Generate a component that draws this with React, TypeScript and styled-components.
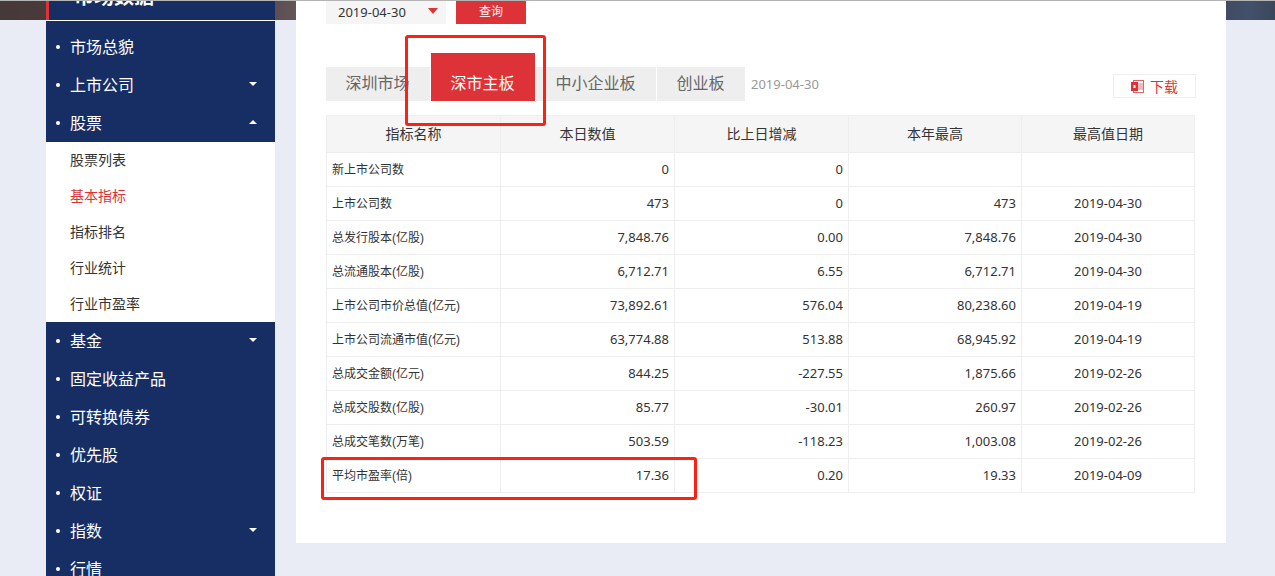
import React from "react";
import styled, { createGlobalStyle } from "styled-components";

const Global = createGlobalStyle`
  html, body { margin: 0; padding: 0; height: 576px; overflow: hidden; background: #e9ecf5; }
  body { font-family: "Liberation Sans", "Noto Sans CJK SC", sans-serif; color: #333; }
  * { box-sizing: border-box; }
`;

const NUM_FONT = `"Noto Sans", "Liberation Sans", sans-serif`;

const Page = styled.div`
  position: relative;
  width: 1275px;
  height: 576px;
  overflow: hidden;
  border-top: 1px solid #b4b4b4;
  background:
    linear-gradient(90deg, #46393a 0, #4a3a3a 46px, #5c4e52 275px, #635659 296px, #3f4c62 1226px, #43506a 1250px, #3c475c 1275px) no-repeat 0 0 / 100% 19px,
    #e9ecf5;
  display: flex;
  align-items: flex-start;
  padding-left: 46px;
`;

const Sidebar = styled.aside`
  width: 229px;
  flex: none;
  background: #172e65;
`;

const SideHead = styled.div`
  height: 19px;
  border-left: 3px solid #dd3338;
  overflow: hidden;
  display: flex;
  align-items: flex-end;
  padding-left: 25px;
  color: #fff;
  font-size: 20px;
  font-weight: bold;
  line-height: 20px;
  & > span { display: block; margin-bottom: 13px; white-space: nowrap; }
`;

const SideRule = styled.div`
  height: 1px;
  background: #fff;
`;

const NavList = styled.ul`
  list-style: none;
  margin: 0;
  padding: 7px 0 0;
`;

const NavItem = styled.li`
  height: 38px;
  display: flex;
  align-items: center;
  padding: 0 18px 0 10px;
  color: #fff;
  font-size: 16px;
  &::before {
    content: "";
    width: 4px;
    height: 4px;
    border-radius: 50%;
    background: #fff;
    margin-right: 10px;
    flex: none;
  }
`;

const NavLabel = styled.span`
  flex: 1;
  margin-top: -2px;
`;

const Caret = styled.i<{ $up?: boolean }>`
  width: 0;
  height: 0;
  margin-top: -2px;
  border-left: 4px solid transparent;
  border-right: 4px solid transparent;
  ${(p) => (p.$up ? "border-bottom: 4px solid #fff;" : "border-top: 4px solid #fff;")}
`;

const SubList = styled.ul`
  list-style: none;
  margin: 0;
  padding: 0;
  background: #fff;
`;

const SubItem = styled.li<{ $active?: boolean }>`
  height: 36px;
  line-height: 36px;
  padding-left: 24px;
  font-size: 14px;
  color: ${(p) => (p.$active ? "#dd3338" : "#333")};
`;

const Main = styled.main`
  width: 930px;
  height: 542px;
  margin-left: 21px;
  background: #fff;
  padding: 0 30px;
  flex: none;
`;

const QueryBar = styled.div`
  display: flex;
  gap: 10px;
  height: 23px;
`;

const DateBox = styled.div`
  width: 120px;
  background: #f5f5f5;
  padding: 0 8px 2px 12px;
  font-family: ${NUM_FONT};
  font-size: 13px;
  color: #333;
  display: flex;
  align-items: center;
  justify-content: space-between;
`;

const DateArrow = styled.i`
  width: 0;
  height: 0;
  border-left: 5px solid transparent;
  border-right: 5px solid transparent;
  border-top: 6px solid #dd3338;
  margin-bottom: 2px;
`;

const QueryButton = styled.button`
  width: 70px;
  border: 0;
  padding: 0 0 4px;
  background: #dd3338;
  color: #fff;
  font: 12px "Liberation Sans", "Noto Sans CJK SC", sans-serif;
`;

const TabRow = styled.div`
  display: flex;
  align-items: flex-end;
  height: 48px;
  margin-top: 29px;
`;

const Tab = styled.div<{ $active?: boolean; $w: number }>`
  width: ${(p) => p.$w}px;
  height: ${(p) => (p.$active ? 48 : 34)}px;
  margin-right: 1px;
  padding-right: 1px;
  background: ${(p) => (p.$active ? "#dd3338" : "#eeeeee")};
  color: ${(p) => (p.$active ? "#fff" : "#666")};
  font-size: 16px;
  line-height: 34px;
  text-align: center;
  padding-top: ${(p) => (p.$active ? 14 : 0)}px;
`;

const TabDate = styled.span`
  margin-left: 5px;
  height: 34px;
  line-height: 34px;
  font-family: ${NUM_FONT};
  font-size: 13px;
  color: #999;
`;

const Download = styled.div`
  margin-left: auto;
  margin-bottom: 3px;
  width: 83px;
  height: 24px;
  border: 1px solid #eee;
  display: flex;
  align-items: center;
  justify-content: center;
  gap: 6px;
  color: #dd3338;
  font-size: 14px;
`;

const DataTable = styled.table`
  margin-top: 14px;
  width: 869px;
  border-collapse: collapse;
  table-layout: fixed;
  font-size: 12px;
`;

const Th = styled.th<{ $w: number }>`
  width: ${(p) => p.$w}px;
  height: 37px;
  background: #f5f5f5;
  border: 1px solid #eee;
  font-size: 14px;
  font-weight: normal;
  color: #333;
  text-align: center;
  padding: 0 0 3px;
`;

const LabelCell = styled.td`
  height: 34px;
  border: 1px solid #eee;
  padding: 0 5px 2px;
  color: #333;
  text-align: left;
`;

const NumCell = styled.td<{ $center?: boolean }>`
  height: 34px;
  border: 1px solid #eee;
  padding: 0 5px 2px;
  font-family: ${NUM_FONT};
  font-size: 13px;
  color: #333;
  text-align: ${(p) => (p.$center ? "center" : "right")};
`;

const Annotation = styled.div<{ $x: number; $y: number; $w: number; $h: number }>`
  position: absolute;
  left: ${(p) => p.$x}px;
  top: ${(p) => p.$y}px;
  width: ${(p) => p.$w}px;
  height: ${(p) => p.$h}px;
  border: 3px solid #ff1f13;
  border-radius: 3px;
  pointer-events: none;
`;

const rows: string[][] = [
  ["新上市公司数", "0", "0", "", ""],
  ["上市公司数", "473", "0", "473", "2019-04-30"],
  ["总发行股本(亿股)", "7,848.76", "0.00", "7,848.76", "2019-04-30"],
  ["总流通股本(亿股)", "6,712.71", "6.55", "6,712.71", "2019-04-30"],
  ["上市公司市价总值(亿元)", "73,892.61", "576.04", "80,238.60", "2019-04-19"],
  ["上市公司流通市值(亿元)", "63,774.88", "513.88", "68,945.92", "2019-04-19"],
  ["总成交金额(亿元)", "844.25", "-227.55", "1,875.66", "2019-02-26"],
  ["总成交股数(亿股)", "85.77", "-30.01", "260.97", "2019-02-26"],
  ["总成交笔数(万笔)", "503.59", "-118.23", "1,003.08", "2019-02-26"],
  ["平均市盈率(倍)", "17.36", "0.20", "19.33", "2019-04-09"],
];

const PptIcon = () => (
  <svg width="13" height="13" viewBox="0 0 13 13" aria-hidden="true">
    <rect x="2.5" y="0.5" width="10" height="12" fill="#fff" stroke="#e4626a" />
    <rect x="7" y="3" width="5" height="7" fill="#f3b9bc" />
    <rect x="0" y="2" width="7" height="9" fill="#dd3338" />
    <rect x="2.5" y="5" width="2" height="3" fill="#fff" />
  </svg>
);

export default function App() {
  return (
    <Page>
      <Global />
      <Sidebar>
        <SideHead><span>市场数据</span></SideHead>
        <SideRule />
        <NavList>
          <NavItem><NavLabel>市场总貌</NavLabel></NavItem>
          <NavItem><NavLabel>上市公司</NavLabel><Caret /></NavItem>
          <NavItem><NavLabel>股票</NavLabel><Caret $up /></NavItem>
          <SubList>
            <SubItem>股票列表</SubItem>
            <SubItem $active>基本指标</SubItem>
            <SubItem>指标排名</SubItem>
            <SubItem>行业统计</SubItem>
            <SubItem>行业市盈率</SubItem>
          </SubList>
          <NavItem><NavLabel>基金</NavLabel><Caret /></NavItem>
          <NavItem><NavLabel>固定收益产品</NavLabel></NavItem>
          <NavItem><NavLabel>可转换债券</NavLabel></NavItem>
          <NavItem><NavLabel>优先股</NavLabel></NavItem>
          <NavItem><NavLabel>权证</NavLabel></NavItem>
          <NavItem><NavLabel>指数</NavLabel><Caret /></NavItem>
          <NavItem><NavLabel>行情</NavLabel></NavItem>
        </NavList>
      </Sidebar>
      <Main>
        <QueryBar>
          <DateBox>2019-04-30<DateArrow /></DateBox>
          <QueryButton>查询</QueryButton>
        </QueryBar>
        <TabRow>
          <Tab $w={104}>深圳市场</Tab>
          <Tab $w={104} $active>深市主板</Tab>
          <Tab $w={120}>中小企业板</Tab>
          <Tab $w={88}>创业板</Tab>
          <TabDate>2019-04-30</TabDate>
          <Download><PptIcon />下载</Download>
        </TabRow>
        <DataTable>
          <thead>
            <tr>
              <Th $w={174}>指标名称</Th>
              <Th $w={174}>本日数值</Th>
              <Th $w={174}>比上日增减</Th>
              <Th $w={173}>本年最高</Th>
              <Th $w={173}>最高值日期</Th>
            </tr>
          </thead>
          <tbody>
            {rows.map((r) => (
              <tr key={r[0]}>
                <LabelCell>{r[0]}</LabelCell>
                <NumCell>{r[1]}</NumCell>
                <NumCell>{r[2]}</NumCell>
                <NumCell>{r[3]}</NumCell>
                <NumCell $center>{r[4]}</NumCell>
              </tr>
            ))}
          </tbody>
        </DataTable>
      </Main>
      <Annotation $x={405} $y={34} $w={141} $h={91} />
      <Annotation $x={321} $y={456} $w={376} $h={43} />
    </Page>
  );
}
